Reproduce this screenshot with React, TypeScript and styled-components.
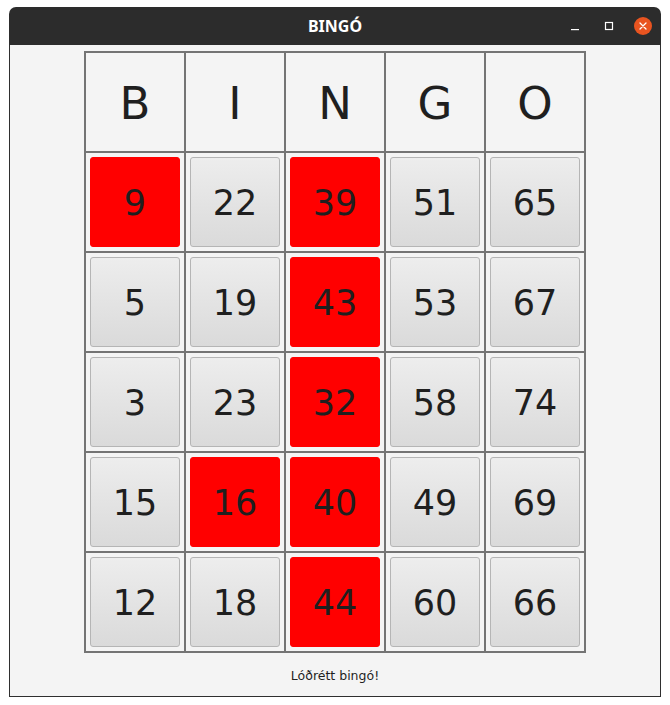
import React from 'react';
import styled, { createGlobalStyle } from 'styled-components';

const GlobalStyle = createGlobalStyle`
  html, body {
    margin: 0;
    padding: 0;
    background: #ffffff;
  }
`;

type Cell = { value: number; marked: boolean };

const letters = ['B', 'I', 'N', 'G', 'O'];

const rows: Cell[][] = [
  [{ value: 9, marked: true }, { value: 22, marked: false }, { value: 39, marked: true }, { value: 51, marked: false }, { value: 65, marked: false }],
  [{ value: 5, marked: false }, { value: 19, marked: false }, { value: 43, marked: true }, { value: 53, marked: false }, { value: 67, marked: false }],
  [{ value: 3, marked: false }, { value: 23, marked: false }, { value: 32, marked: true }, { value: 58, marked: false }, { value: 74, marked: false }],
  [{ value: 15, marked: false }, { value: 16, marked: true }, { value: 40, marked: true }, { value: 49, marked: false }, { value: 69, marked: false }],
  [{ value: 12, marked: false }, { value: 18, marked: false }, { value: 44, marked: true }, { value: 60, marked: false }, { value: 66, marked: false }],
];

const Window = styled.div`
  margin: 7px 0 0 9px;
  width: 652px;
  height: 690px;
  display: flex;
  flex-direction: column;
  border-radius: 7px 7px 0 0;
  overflow: hidden;
`;

const TitleBar = styled.div`
  position: relative;
  height: 38px;
  flex: none;
  background: #2c2c2c;
  display: flex;
  align-items: center;
  justify-content: center;
`;

const Title = styled.span`
  font-family: "Noto Sans", "Open Sans", sans-serif;
  font-weight: 700;
  font-size: 16px;
  color: #ffffff;
`;

const Controls = styled.div`
  position: absolute;
  right: 9px;
  top: 0;
  height: 38px;
  display: flex;
  align-items: center;
  gap: 16px;
`;

const ControlButton = styled.div`
  width: 18px;
  height: 18px;
  display: flex;
  align-items: center;
  justify-content: center;
`;

const CloseButton = styled(ControlButton)`
  border-radius: 50%;
  background: #e95420;
`;

const Content = styled.div`
  flex: 1;
  background: #f4f4f4;
  border: 1px solid #2f2f2f;
  border-top: none;
  display: flex;
  flex-direction: column;
  align-items: center;
  padding-top: 6px;
`;

const Board = styled.div`
  display: grid;
  grid-template-columns: repeat(5, 100px);
  grid-auto-rows: 100px;
  border: 1px solid #747474;
`;

const GridCell = styled.div`
  border: 1px solid #747474;
  display: flex;
  align-items: center;
  justify-content: center;
`;

const Letter = styled.span`
  font-family: "DejaVu Sans", sans-serif;
  font-size: 45px;
  color: #1f1f1f;
  padding-top: 3px;
`;

const NumberButton = styled.div<{ $marked: boolean }>`
  width: 90px;
  height: 90px;
  box-sizing: border-box;
  border-radius: 3px;
  display: flex;
  align-items: center;
  justify-content: center;
  padding-top: 2px;
  font-family: "DejaVu Sans", sans-serif;
  font-size: 35px;
  color: #1f1f1f;
  background: ${(p) => (p.$marked ? '#ff0000' : 'linear-gradient(#ededed, #dadada)')};
  border: 1px solid ${(p) => (p.$marked ? '#ff0000' : '#b5b5b5')};
`;

const Status = styled.div`
  flex: 1;
  display: flex;
  align-items: center;
  justify-content: center;
  font-family: "DejaVu Sans", sans-serif;
  font-size: 12.5px;
  color: #1f1f1f;
  padding-top: 2px;
`;

const App = () => (
  <>
    <GlobalStyle />
    <Window>
      <TitleBar>
        <Title>BINGÓ</Title>
        <Controls>
          <ControlButton>
            <svg width="10" height="10" viewBox="0 0 10 10">
              <rect x="1" y="8" width="8" height="1.2" fill="#ffffff" />
            </svg>
          </ControlButton>
          <ControlButton>
            <svg width="10" height="10" viewBox="0 0 10 10">
              <rect x="1.5" y="1.5" width="7" height="7" fill="none" stroke="#ffffff" strokeWidth="1.2" />
            </svg>
          </ControlButton>
          <CloseButton>
            <svg width="10" height="10" viewBox="0 0 10 10">
              <path d="M2 2 L8 8 M8 2 L2 8" stroke="#ffffff" strokeWidth="1.3" strokeLinecap="round" />
            </svg>
          </CloseButton>
        </Controls>
      </TitleBar>
      <Content>
        <Board>
          {letters.map((l) => (
            <GridCell key={l}>
              <Letter>{l}</Letter>
            </GridCell>
          ))}
          {rows.map((row, r) =>
            row.map((c, i) => (
              <GridCell key={`${r}-${i}`}>
                <NumberButton $marked={c.marked}>{c.value}</NumberButton>
              </GridCell>
            )),
          )}
        </Board>
        <Status>Lóðrétt bingó!</Status>
      </Content>
    </Window>
  </>
);

export default App;
